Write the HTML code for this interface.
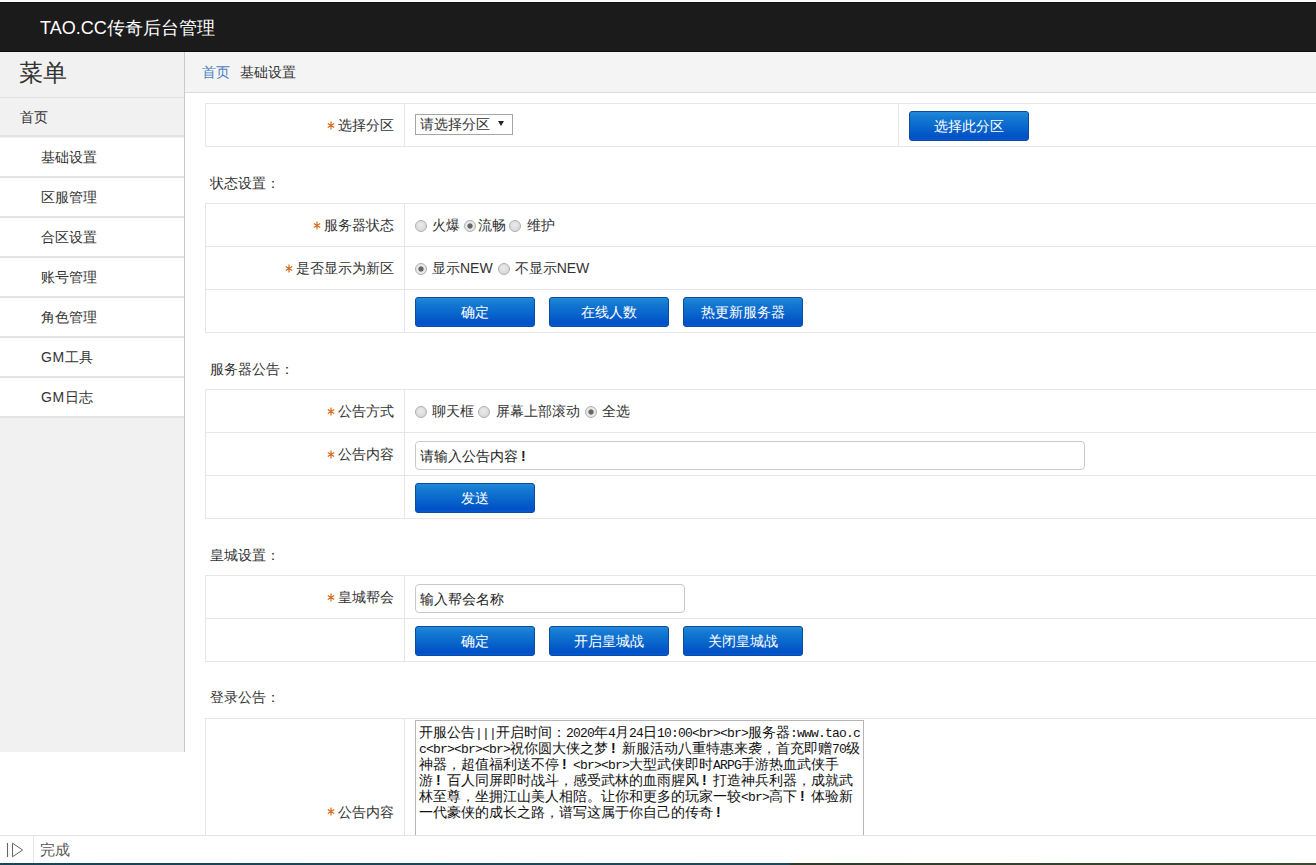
<!DOCTYPE html>
<html><head><meta charset="utf-8">
<style>
*{box-sizing:border-box;margin:0;padding:0}
html,body{width:1316px;height:865px;overflow:hidden;background:#fff;font-family:"Liberation Sans",sans-serif;color:#333;font-size:14px}
.abs{position:absolute}
#top{left:0;top:0;width:1316px;height:2px;background:#fafafa}
#hdr{left:0;top:2px;width:1316px;height:50px;background:#1b1b1b;border-top:1px solid #111;border-bottom:1px solid #0e0e0e}
#hdr .t{position:absolute;left:40px;top:14px;font-size:18px;color:#fff;line-height:22px;white-space:nowrap}
#side{left:0;top:52px;width:185px;height:700px;background:#f1f1f1;border-right:1px solid #c9c9c9}
#side .ttl{position:absolute;left:19px;top:4px;font-size:24px;line-height:34px;color:#333}
.mi{position:absolute;left:0;width:184px;height:40px;line-height:38px;font-size:14px;color:#333;background:#fff;border-bottom:2px solid #e4e4e4}
.mi.home{background:#f1f1f1;padding-left:20px;border-top:1px solid #e0e0e0}
.mi.sub{padding-left:41px}
#crumb{left:185px;top:52px;width:1131px;height:41px;background:#f4f4f4;border-bottom:1px solid #dcdcdc;font-size:14px;line-height:40px;padding-left:17px}
#crumb .a{color:#4b80bf}
#crumb .b{margin-left:10px;color:#333}
table{position:absolute;left:205px;width:1200px;border-collapse:collapse}
td{border:1px solid #e6e6e6;height:43px;font-size:14px;vertical-align:middle;padding-top:2px}
td.l{width:199px;text-align:right;padding-right:10px}
td.c{padding-left:10px}
.st{display:inline-block;vertical-align:middle;margin-right:3px;position:relative;top:-1px}
.sec{position:absolute;left:210px;font-size:14px;color:#333;line-height:20px}
.btn{display:inline-block;width:120px;height:30px;border:1px solid #0b4c9c;border-radius:3px;background:linear-gradient(#2089d8 0,#1479d2 20%,#0b69cd 50%,#0050c6 90%,#0857d6 100%);color:#fff;text-align:center;line-height:28px;font-size:14px;vertical-align:middle;margin-right:14px}
.sel{display:inline-block;width:98px;height:21px;border:1px solid #a6a6a6;background:#fff;font-size:14px;line-height:19px;padding-left:4px;position:relative;vertical-align:middle;top:-2px}
.sel:after{content:"";position:absolute;right:8px;top:6px;border-left:3px solid transparent;border-right:3px solid transparent;border-top:5px solid #222}
.rd{display:inline-block;width:12px;height:12px;border-radius:50%;border:1px solid #b0b0b0;background:radial-gradient(circle at 45% 40%,#ebebeb,#d2d2d2);vertical-align:middle;position:relative;top:0px}
.rt{vertical-align:middle}
.rd.on{background:radial-gradient(circle,#666 0,#666 2.2px,#dedede 3px,#eeeeee 4px,#d4d4d4 6px)}
.inp{display:inline-block;height:29px;border:1px solid #c9c9c9;border-radius:4px;background:#fff;font-size:14px;line-height:27px;padding-left:4px;padding-top:1px;color:#222;vertical-align:middle}
#ta{position:absolute;left:415px;top:720px;width:449px;height:200px;border:1px solid #b5b5b5;background:#fff;font-size:14px;line-height:16px;padding:3px 3px 3px 3px;color:#111;white-space:nowrap}
.ex{display:inline-block;width:14px;padding-left:3px;font-weight:bold}
#ta .ln{height:16px;line-height:16px}
#ta .m{line-height:10px;font-family:"Liberation Mono",monospace;font-size:13px;letter-spacing:-0.8px}
#status{left:0;top:835px;width:1316px;height:28px;background:#fff;border-top:1px solid #e2e2e2}
#status .div{position:absolute;left:33px;top:0;width:1px;height:28px;background:#e6e6e6}
#status .tx{position:absolute;left:40px;top:4px;font-size:15px;color:#555;line-height:20px}
#bot{left:0;top:863px;width:1316px;height:2px;background:linear-gradient(90deg,#16455a 0,#1a4a5c 60%,#2c3b2a 60%,#3c4a30 100%)}
</style></head><body>
<div id="top" class="abs"></div>
<div id="hdr" class="abs"><div class="t">TAO.CC传奇后台管理</div></div>
<div id="side" class="abs">
  <div class="ttl">菜单</div>
  <div class="mi home" style="top:45px">首页</div>
  <div class="mi sub" style="top:86px">基础设置</div>
  <div class="mi sub" style="top:126px">区服管理</div>
  <div class="mi sub" style="top:166px">合区设置</div>
  <div class="mi sub" style="top:206px">账号管理</div>
  <div class="mi sub" style="top:246px">角色管理</div>
  <div class="mi sub" style="top:286px"><span style="letter-spacing:0.6px">GM</span>工具</div>
  <div class="mi sub" style="top:326px"><span style="letter-spacing:0.6px">GM</span>日志</div>
</div>
<div id="crumb" class="abs"><span class="a">首页</span><span class="b">基础设置</span></div>

<table style="top:103px">
<tr><td class="l"><svg class="st" width="8" height="9" viewBox="0 0 8 9"><path d="M4 0.5V8.5M0.8 2.4L7.2 6.6M0.8 6.6L7.2 2.4" stroke="#d56c1c" stroke-width="1.2" fill="none"/></svg>选择分区</td><td class="c" style="width:494px"><span class="sel">请选择分区</span></td><td class="c"><span class="btn">选择此分区</span></td></tr>
</table>

<div class="sec" style="top:173px">状态设置：</div>
<table style="top:203px">
<tr><td class="l"><svg class="st" width="8" height="9" viewBox="0 0 8 9"><path d="M4 0.5V8.5M0.8 2.4L7.2 6.6M0.8 6.6L7.2 2.4" stroke="#d56c1c" stroke-width="1.2" fill="none"/></svg>服务器状态</td><td class="c"><span class="rd" style="margin-right:5px"></span><span class="rt">火爆</span><span class="rd on" style="margin-left:4px;margin-right:2px"></span><span class="rt">流畅</span><span class="rd" style="margin-left:3px;margin-right:6px"></span><span class="rt">维护</span></td></tr>
<tr><td class="l"><svg class="st" width="8" height="9" viewBox="0 0 8 9"><path d="M4 0.5V8.5M0.8 2.4L7.2 6.6M0.8 6.6L7.2 2.4" stroke="#d56c1c" stroke-width="1.2" fill="none"/></svg>是否显示为新区</td><td class="c"><span class="rd on" style="margin-right:5px"></span><span class="rt">显示NEW</span><span class="rd" style="margin-left:5px;margin-right:5px"></span><span class="rt">不显示NEW</span></td></tr>
<tr><td class="l"></td><td class="c"><span class="btn">确定</span><span class="btn">在线人数</span><span class="btn">热更新服务器</span></td></tr>
</table>

<div class="sec" style="top:359px">服务器公告：</div>
<table style="top:389px">
<tr><td class="l"><svg class="st" width="8" height="9" viewBox="0 0 8 9"><path d="M4 0.5V8.5M0.8 2.4L7.2 6.6M0.8 6.6L7.2 2.4" stroke="#d56c1c" stroke-width="1.2" fill="none"/></svg>公告方式</td><td class="c"><span class="rd" style="margin-right:5px"></span><span class="rt">聊天框</span><span class="rd" style="margin-left:4px;margin-right:6px"></span><span class="rt">屏幕上部滚动</span><span class="rd on" style="margin-left:5px;margin-right:5px"></span><span class="rt">全选</span></td></tr>
<tr><td class="l"><svg class="st" width="8" height="9" viewBox="0 0 8 9"><path d="M4 0.5V8.5M0.8 2.4L7.2 6.6M0.8 6.6L7.2 2.4" stroke="#d56c1c" stroke-width="1.2" fill="none"/></svg>公告内容</td><td class="c"><span class="inp" style="width:670px">请输入公告内容<span class="ex">!</span></span></td></tr>
<tr><td class="l"></td><td class="c"><span class="btn">发送</span></td></tr>
</table>

<div class="sec" style="top:545px">皇城设置：</div>
<table style="top:575px">
<tr><td class="l"><svg class="st" width="8" height="9" viewBox="0 0 8 9"><path d="M4 0.5V8.5M0.8 2.4L7.2 6.6M0.8 6.6L7.2 2.4" stroke="#d56c1c" stroke-width="1.2" fill="none"/></svg>皇城帮会</td><td class="c"><span class="inp" style="width:270px">输入帮会名称</span></td></tr>
<tr><td class="l"></td><td class="c"><span class="btn">确定</span><span class="btn">开启皇城战</span><span class="btn">关闭皇城战</span></td></tr>
</table>

<div class="sec" style="top:687px">登录公告：</div>
<table style="top:718px">
<tr><td class="l" style="height:186px"><svg class="st" width="8" height="9" viewBox="0 0 8 9"><path d="M4 0.5V8.5M0.8 2.4L7.2 6.6M0.8 6.6L7.2 2.4" stroke="#d56c1c" stroke-width="1.2" fill="none"/></svg>公告内容</td><td class="c"></td></tr>
</table>
<div id="ta"><div class="ln">开服公告<span class="m">|||</span>开启时间：<span class="m">2020</span>年<span class="m">4</span>月<span class="m">24</span>日<span class="m">10:00&lt;br&gt;&lt;br&gt;</span>服务器<span class="m">:www.tao.c</span></div><div class="ln"><span class="m">c&lt;br&gt;&lt;br&gt;&lt;br&gt;</span>祝你圆大侠之梦<span class="ex">!</span>新服活动八重特惠来袭，首充即赠<span class="m">70</span>级</div><div class="ln">神器，超值福利送不停<span class="ex">!</span><span class="m">&lt;br&gt;&lt;br&gt;</span>大型武侠即时<span class="m">ARPG</span>手游热血武侠手</div><div class="ln">游<span class="ex">!</span>百人同屏即时战斗，感受武林的血雨腥风<span class="ex">!</span>打造神兵利器，成就武</div><div class="ln">林至尊，坐拥江山美人相陪。让你和更多的玩家一较<span class="m">&lt;br&gt;</span>高下<span class="ex">!</span>体验新</div><div class="ln">一代豪侠的成长之路，谱写这属于你自己的传奇<span class="ex">!</span></div></div>

<div id="status" class="abs"><svg style="position:absolute;left:5px;top:6px" width="20" height="16" viewBox="0 0 20 16"><path d="M2.5 1V15" stroke="#666" stroke-width="1.1" fill="none"/><path d="M7.5 1.2L17.6 8L7.5 14.8Z" stroke="#666" stroke-width="1" fill="none" stroke-linejoin="miter"/></svg><div class="div"></div><div class="tx">完成</div></div>
<div id="bot" class="abs"></div>
</body></html>
